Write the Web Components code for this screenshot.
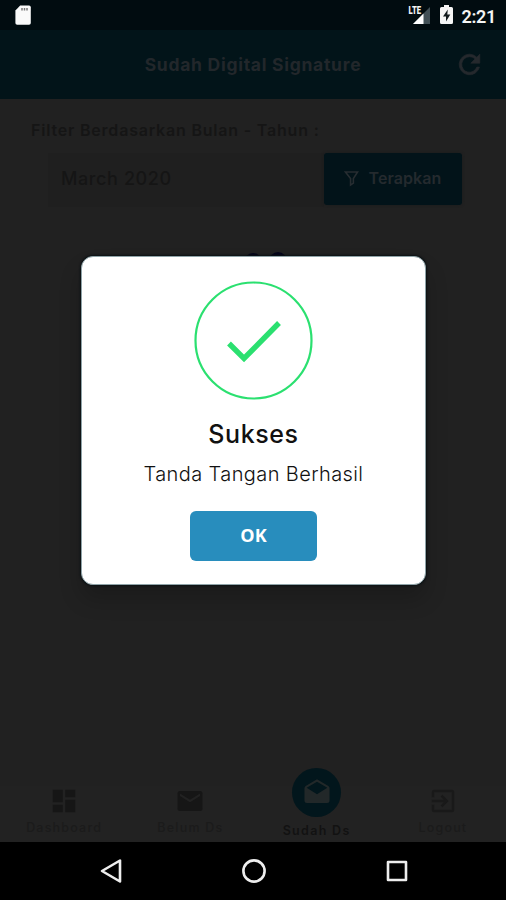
<!DOCTYPE html>
<html lang="id">
<head>
<meta charset="utf-8">
<title>Sudah Digital Signature</title>
<style>
html,body{margin:0;background:#212121;overflow:hidden}
body{font-family:Inter,"Liberation Sans",sans-serif}
</style>
</head>
<body>
<phone-screen>
  <status-bar slot="top"></status-bar>
  <app-bar slot="top">Sudah Digital Signature</app-bar>
  <filter-form month="March 2020">Filter Berdasarkan Bulan - Tahun :</filter-form>
  <tab-bar slot="bottom">
    <tab-item icon="dash">Dashboard</tab-item>
    <tab-item icon="mail">Belum Ds</tab-item>
    <tab-item icon="open" active>Sudah Ds</tab-item>
    <tab-item icon="exit">Logout</tab-item>
  </tab-bar>
  <system-nav slot="bottom"></system-nav>
  <success-dialog slot="overlay" action="OK"><span slot="title">Sukses</span>Tanda Tangan Berhasil</success-dialog>
</phone-screen>
<script>
const define = (name, html) => customElements.define(name, class extends HTMLElement {
  constructor() {
    super();
    this.attachShadow({mode: 'open'}).innerHTML = typeof html === 'function' ? html(this) : html;
  }
});

define('phone-screen', `
<style>
:host{display:flex;flex-direction:column;position:relative;width:506px;height:900px;background:#212121;overflow:hidden}
main{flex:1}
</style>
<slot name="top"></slot><main><slot></slot></main><slot name="bottom"></slot><slot name="overlay"></slot>`);

define('status-bar', `
<style>
:host{display:flex;align-items:center;height:30px;box-sizing:border-box;padding:0 10px 0 14px;background:#010c10;color:#f4f4f4}
.sd{margin-right:auto}
svg{display:block}
.lte{margin-right:9px}
.bat{margin-right:8px}
time{font:600 18px/30px Roboto,sans-serif;letter-spacing:-.3px;padding-top:3px}
</style>
<svg class="sd" width="18" height="22" viewBox="0 0 18 22"><path d="M6.200 1.500H15q1.800 0 1.800 1.800V19q0 1.800-1.800 1.800H3.200Q1.400 20.800 1.400 19V6.500Z" fill="#fafafa"/><path d="M8 4v2.500M10.500 4v2.500M13 4v2.500" stroke="#777" stroke-width="1.500"/></svg>
<svg class="lte" width="23" height="20" viewBox="0 0 23 20"><path d="M22 2v17H5z" fill="#425056"/><path d="M15.500 8.500V19H5z" fill="#fff"/><path d="M0 0h13v10H0z" fill="#010c10"/><text x="0.500" y="9" font-family="Roboto" font-weight="900" font-size="11" textLength="12.500" lengthAdjust="spacingAndGlyphs" fill="#f4f4f4">LTE</text></svg>
<svg class="bat" width="13" height="20" viewBox="0 0 13 20"><path d="M4 0h5v2h2.500Q13 2 13 3.500v14q0 1.500-1.500 1.500h-10Q0 19 0 17.500v-14Q0 2 1.500 2H4z" fill="#f5f5f5"/><path d="M7.800 4.500 3 11.500h3V16.500l4.300-7H7.300z" fill="#10181b"/></svg>
<time>2:21</time>`);

define('app-bar', `
<style>
:host{display:grid;grid-template-columns:74px 1fr 74px;align-items:center;height:69px;background:#021419;color:#22272b}
h1{margin:0;font-size:17.500px;font-weight:700;text-align:center;letter-spacing:.72px;white-space:nowrap}
svg{display:block;justify-self:center}
</style>
<span></span><h1><slot></slot></h1>
<svg width="31" height="31" viewBox="0 0 24 24" fill="#25292d" stroke="#25292d" stroke-width=".5"><path d="M17.650 6.350A7.960 7.960 0 0 0 12 4a8 8 0 1 0 7.730 10h-2.080A6 6 0 1 1 12 6c1.660 0 3.140.69 4.220 1.780L13 11h7V4z"/></svg>`);

define('filter-form', el => `
<style>
:host{display:block;padding:21px 44px 0 31px;color:#151515}
p{margin:0;font-size:16px;line-height:20px;font-weight:600;letter-spacing:.8px;white-space:nowrap}
.row{display:flex;margin:13px 0 0 17px}
.month{flex:1;height:54px;background:#1f1f1f;font-size:18px;line-height:52px;font-weight:500;letter-spacing:.6px;text-indent:13px}
.apply{display:flex;align-items:center;justify-content:center;gap:9px;width:138px;height:52px;border-radius:3px;background:#021319;color:#242a2e;font-size:16px;line-height:20px;font-weight:600;letter-spacing:.1px;box-shadow:0 0 3px #181b1c}
.apply svg{margin-bottom:2px}
.apply span{margin-bottom:2px}
.loader{display:flex;justify-content:center;gap:7px;margin:45px 0 0 38px}
.loader i{width:18px;height:18px;border-radius:50%;background:#05051a}
.loader i:first-child{margin-top:1px}
</style>
<p><slot></slot></p>
<div class="row"><div class="month">${el.getAttribute('month')}</div>
<div class="apply"><svg width="15" height="17" viewBox="0 0 16 18" fill="none" stroke="#272d31" stroke-width="1.700"><path d="M1.500 2h13L10 9v5l-3 2V9z"/></svg><span>Terapkan</span></div></div>
<div class="loader"><i></i><i></i></div>`);

define('tab-bar', `
<style>
:host{display:grid;grid-template-columns:repeat(4,1fr);height:56px;padding-left:1px;box-sizing:border-box;background:#222;color:#191919}
</style><slot></slot>`);

const icons = {
  dash: '<path d="M3 13h8V3H3zm0 8h8v-6H3zm10 0h8V11h-8zm0-18v6h8V3z"/>',
  mail: '<path d="M20 4H4a2 2 0 0 0-2 2v12a2 2 0 0 0 2 2h16a2 2 0 0 0 2-2V6a2 2 0 0 0-2-2zm0 4-8 5-8-5V6l8 5 8-5z"/>',
  open: '<path d="M22 8c0-.720-.370-1.350-.940-1.700L12 1 2.950 6.300A2 2 0 0 0 2 8v10a2 2 0 0 0 2 2h16a2 2 0 0 0 2-2zM12 13 3.740 7.840 12 3l8.260 4.840z"/>',
  exit: '<path d="M10.090 15.590 11.500 17l5-5-5-5-1.410 1.410L12.670 11H3v2h9.670zM19 3H5a2 2 0 0 0-2 2v4h2V5h14v14H5v-4H3v4a2 2 0 0 0 2 2h14a2 2 0 0 0 2-2V5a2 2 0 0 0-2-2z"/>'
};
define('tab-item', el => `
<style>
:host{display:flex;flex-direction:column;align-items:center;font-size:12.500px;line-height:16px;font-weight:500;letter-spacing:1.200px;color:#1b1b1b;white-space:nowrap}
.icon{width:30px;height:30px;display:grid;place-items:center;margin-bottom:4px}
svg{display:block;fill:#161616}
:host([icon=exit]) svg{fill:#191919}
:host([active]){color:#121212;font-weight:600;letter-spacing:1.300px}
:host([active]) .icon{width:49px;height:49px;margin:-18px 0 6px;border-radius:50%;background:#02161c}
:host([active]) svg{fill:#222829}
</style>
<span class="icon"><svg width="30" height="30" viewBox="0 0 24 24">${icons[el.getAttribute('icon')]}</svg></span><span><slot></slot></span>`);

define('system-nav', `
<style>
:host{display:flex;justify-content:center;gap:118px;align-items:center;height:58px;padding-left:1px;box-sizing:border-box;background:#000}
svg{display:block;fill:none;stroke:#eee;stroke-width:2.600;stroke-linejoin:round}
</style>
<svg width="24" height="26" viewBox="0 0 24 26"><path d="M21 2.500v21L3 13z"/></svg>
<svg width="26" height="26" viewBox="0 0 26 26"><circle cx="13" cy="13" r="10.600"/></svg>
<svg width="24" height="26" viewBox="0 0 24 26"><path d="M3 4h18v18H3z"/></svg>`);

define('success-dialog', el => `
<style>
:host{position:absolute;left:81px;top:256px;width:345px;height:329px;box-sizing:border-box;display:flex;flex-direction:column;align-items:center;padding-top:24px;border:1px solid #8fa3a8;border-radius:12px;background:#fff;color:#111;box-shadow:0 0 2px 1px #0b1114,0 14px 22px rgba(0,0,0,.2)}
svg{display:block;flex:none}
h2{margin:17px 0 0;font-size:25px;line-height:32px;font-weight:500;letter-spacing:.6px}
p{margin:9px 0 0;font-size:20px;line-height:30px;font-weight:300;letter-spacing:.4px;white-space:nowrap}
button{margin:22px 0 0;width:127px;height:50px;border:0;border-radius:6px;background:#288dbd;color:#fff;font:700 18px "Open Sans",sans-serif;padding:0 0 2px}
</style>
<svg width="120" height="120" viewBox="0 0 120 120" fill="none" stroke="#2be070"><circle cx="59.500" cy="59.500" r="58" stroke-width="2.200"/><path d="M35 62.500 50 77.500 85 42" stroke-width="5.400"/></svg>
<h2><slot name="title"></slot></h2><p><slot></slot></p><button>${el.getAttribute('action')}</button>`);
</script>
</body>
</html>
